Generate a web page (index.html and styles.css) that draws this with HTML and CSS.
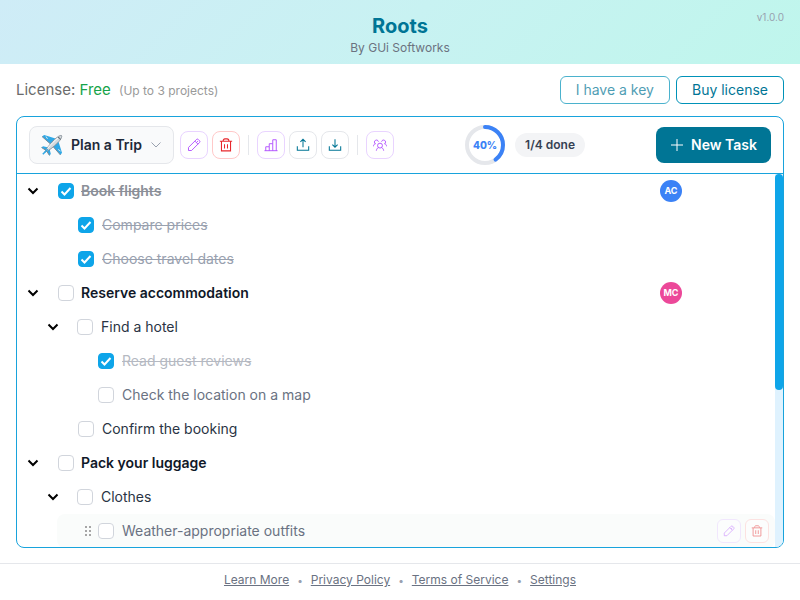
FILE: index.html
```html
<!DOCTYPE html>
<html lang="en">
<head>
  <meta charset="UTF-8">
  <meta name="viewport" content="width=device-width, initial-scale=1">
  <title>Roots</title>
  <link rel="stylesheet" href="styles.css">
</head>
<body>

  <!-- shared icons -->
  <svg class="sprite" aria-hidden="true">
    <symbol id="pencil" viewBox="0 0 16 16">
      <path d="M1.7 14.3V10.800L10.800 1.700a1.500 1.500 0 0 1 2.100 0l1.400 1.400a1.500 1.500 0 0 1 0 2.100L5.200 14.300zM9 3.500L12.500 7M10.800 5.200l1.700-1.700"/>
    </symbol>
    <symbol id="trash" viewBox="0 0 16 16">
      <path d="M1 3.800h14M4.700 3.500c0-1.500.7-2.500 2-2.500h2.600c1.300 0 2 1 2 2.500M2.800 4v10.700h10.400v-10.700M6.300 7v5M9.700 7v5" stroke-width="1.200"/>
    </symbol>
    <symbol id="chevron" viewBox="0 0 12 12">
      <path d="M1.500 3.500L6 8l4.500-4.500"/>
    </symbol>
  </svg>

  <header class="header">
    <h1>Roots</h1>
    <p>By GUi Softworks</p>
    <span class="version">v1.0.0</span>
  </header>

  <main>
    <div class="license">
      <p>License: <span class="plan">Free</span> <small>(Up to 3 projects)</small></p>
      <div class="license-buttons">
        <button class="btn faded">I have a key</button>
        <button class="btn">Buy license</button>
      </div>
    </div>

    <section class="panel">
      <div class="toolbar">
        <div class="tools">
          <label class="project">
            <svg class="plane" viewBox="0 0 22 22" aria-hidden="true">
              <path d="M1 2.500l2.200-1.500 11.300 3.500-5 5.500z" fill="#2fa8e6"/>
              <path d="M19.500 21l1.500-2.200-3.500-11.300-5.500 5z" fill="#2fa8e6"/>
              <path d="M.5 13.500l1.500-1.300 5.500 1.300-2.500 3z" fill="#2fa8e6"/>
              <path d="M8.500 21.500l1.300-1.500-1.300-5.500-3 2.500z" fill="#2fa8e6"/>
              <path d="M1 2.500l8.500 7.500M19.500 21L12 12.500M.5 13.500l4.700 3M8.500 21.500l-3-4.700" stroke="#7d8c98" fill="none"/>
              <path d="M5 2.500l1.500 2.300M19.500 17l-2.300-1.500" stroke="#dfe6ea" fill="none"/>
              <path d="M3.500 18.500c1.500-3.500 5.500-8.500 10-13 2.500-2.500 5.700-4.500 7-4 .9 1.400-1 4.500-3.500 7-4.500 4.500-9.500 8.500-13.500 10z" fill="#d5dade" stroke="#7d8892" stroke-width=".8"/>
              <path d="M6.500 14.500c3-3.800 7.500-8.500 11-10.800" stroke="#fff" fill="none"/>
              <path d="M17 3.500l1.700.6.600 1.500" stroke="#4d5963" fill="none"/>
              <path d="M1.800 20.200l5-5" stroke="#2fa8e6" stroke-width="1.500"/>
            </svg>
            <select aria-label="Project">
              <option>Plan a Trip</option>
            </select>
            <svg class="caret" aria-hidden="true"><use href="#chevron"/></svg>
          </label>
          <button class="icon-btn purple" aria-label="Edit project"><svg><use href="#pencil"/></svg></button>
          <button class="icon-btn red" aria-label="Delete project"><svg><use href="#trash"/></svg></button>
          <span class="divider"></span>
          <button class="icon-btn purple" aria-label="Statistics">
            <svg viewBox="0 0 16 16"><path d="M.5 14.500h15M2 14.500v-4.500h4v4.500M6 10v-3.500h4v8M10 6.500v-4.500h4v12.500"/></svg>
          </button>
          <button class="icon-btn teal" aria-label="Export">
            <svg viewBox="0 0 16 16"><path d="M1.500 9.500v4.500h13v-4.500M8 10.500v-9M5 4.500l3-3 3 3" stroke-width="1.200"/></svg>
          </button>
          <button class="icon-btn teal" aria-label="Import">
            <svg viewBox="0 0 16 16"><path d="M1.500 9.500v4.500h13v-4.500M8 1.500v9M5 7.500l3 3 3-3" stroke-width="1.200"/></svg>
          </button>
          <span class="divider"></span>
          <button class="icon-btn purple" aria-label="Team">
            <svg viewBox="0 0 16 16"><circle cx="8" cy="8.700" r="2.800"/><path d="M3.800 14.500c.2-1.700 1-2.800 2.400-3.500M12.200 14.500c-.2-1.700-1-2.800-2.400-3.500M2.600 6.500a2.300 2.300 0 1 1 3.600-2.300M.5 9.500c.1-1.700.9-2.700 2.500-3M13.400 6.500a2.300 2.300 0 1 0-3.600-2.300M15.500 9.500c-.1-1.700-.9-2.700-2.500-3"/></svg>
          </button>
        </div>

        <div class="progress">
          <div class="ring">
            <svg viewBox="0 0 40 40" aria-hidden="true">
              <circle cx="20" cy="20" r="18" stroke="#e5e7eb"/>
              <circle cx="20" cy="20" r="18" stroke="#3b82f6" pathLength="100" stroke-dasharray="40 100" stroke-linecap="round" transform="rotate(-90 20 20)"/>
            </svg>
            <span>40%</span>
          </div>
          <span class="pill">1/4 done</span>
        </div>

        <button class="new-task">
          <svg viewBox="0 0 14 14" aria-hidden="true"><path d="M7 1v12M1 7h12"/></svg>
          New Task
        </button>
      </div>

      <div class="content">
        <ul class="tasks">
          <li class="task parent">
            <button class="toggle" aria-label="Collapse"><svg><use href="#chevron"/></svg></button>
            <span class="grip"></span>
            <label><input type="checkbox" checked><span>Book flights</span></label>
            <span class="avatar blue">AC</span>
            <span class="actions"></span>
          </li>
          <li class="task level-1">
            <span class="toggle"></span>
            <span class="grip"></span>
            <label><input type="checkbox" checked><span>Compare prices</span></label>
          </li>
          <li class="task level-1">
            <span class="toggle"></span>
            <span class="grip"></span>
            <label><input type="checkbox" checked><span>Choose travel dates</span></label>
          </li>
          <li class="task parent">
            <button class="toggle" aria-label="Collapse"><svg><use href="#chevron"/></svg></button>
            <span class="grip"></span>
            <label><input type="checkbox"><span>Reserve accommodation</span></label>
            <span class="avatar pink">MC</span>
            <span class="actions"></span>
          </li>
          <li class="task level-1">
            <button class="toggle" aria-label="Collapse"><svg><use href="#chevron"/></svg></button>
            <span class="grip"></span>
            <label><input type="checkbox"><span>Find a hotel</span></label>
          </li>
          <li class="task level-2">
            <span class="toggle"></span>
            <span class="grip"></span>
            <label><input type="checkbox" checked><span>Read guest reviews</span></label>
          </li>
          <li class="task level-2">
            <span class="toggle"></span>
            <span class="grip"></span>
            <label><input type="checkbox"><span>Check the location on a map</span></label>
          </li>
          <li class="task level-1">
            <span class="toggle"></span>
            <span class="grip"></span>
            <label><input type="checkbox"><span>Confirm the booking</span></label>
          </li>
          <li class="task parent">
            <button class="toggle" aria-label="Collapse"><svg><use href="#chevron"/></svg></button>
            <span class="grip"></span>
            <label><input type="checkbox"><span>Pack your luggage</span></label>
          </li>
          <li class="task level-1">
            <button class="toggle" aria-label="Collapse"><svg><use href="#chevron"/></svg></button>
            <span class="grip"></span>
            <label><input type="checkbox"><span>Clothes</span></label>
          </li>
          <li class="task level-2 active">
            <span class="toggle"></span>
            <span class="grip">
              <svg viewBox="0 0 8 12" aria-hidden="true">
                <circle cx="2" cy="2" r="1"/><circle cx="6" cy="2" r="1"/>
                <circle cx="2" cy="6" r="1"/><circle cx="6" cy="6" r="1"/>
                <circle cx="2" cy="10" r="1"/><circle cx="6" cy="10" r="1"/>
              </svg>
            </span>
            <label><input type="checkbox"><span>Weather-appropriate outfits</span></label>
            <span class="actions">
              <button class="icon-btn small purple" aria-label="Edit task"><svg><use href="#pencil"/></svg></button>
              <button class="icon-btn small red" aria-label="Delete task"><svg><use href="#trash"/></svg></button>
            </span>
          </li>
        </ul>
        <div class="scrollbar"><div class="thumb"></div></div>
      </div>
    </section>
  </main>

  <footer class="footer">
    <a href="#">Learn More</a>
    <span>•</span>
    <a href="#">Privacy Policy</a>
    <span>•</span>
    <a href="#">Terms of Service</a>
    <span>•</span>
    <a href="#">Settings</a>
  </footer>

</body>
</html>
```
FILE: styles.css
```css
* {
  box-sizing: border-box;
}
body {
  margin: 0;
  height: 100vh;
  display: flex;
  flex-direction: column;
  font-family: Inter, sans-serif;
  font-size: 14px;
  line-height: 20px;
  color: #2a3444;
  background: #fff;
}
h1, p, ul {
  margin: 0;
  padding: 0;
}
button, select, input {
  font: inherit;
  color: inherit;
  margin: 0;
}
button {
  cursor: pointer;
}
svg {
  fill: none;
  stroke: currentColor;
  display: block;
}
.sprite {
  display: none;
}

/* header */
.header {
  position: relative;
  padding: 12px 16px 8px;
  text-align: center;
  background: linear-gradient(135deg, #cfecf7, #c8f2f2 50%, #bff6ec);
}
.header h1 {
  font-size: 20px;
  line-height: 28px;
  font-weight: 700;
  color: #007595;
}
.header p {
  font-size: 12px;
  line-height: 16px;
  color: #6b7280;
}
.version {
  position: absolute;
  top: 10px;
  right: 16px;
  font-size: 10px;
  line-height: 15px;
  color: #99a1af;
}

main {
  flex: 1;
  min-height: 0;
  display: flex;
  flex-direction: column;
  gap: 12px;
  padding: 12px 16px 15px;
}
.license {
  display: flex;
  justify-content: space-between;
  align-items: center;
  font-size: 15px;
  color: #6b6b6b;
}
.license small {
  margin-left: 4px;
  font-size: 12px;
  color: #999;
}
.plan {
  color: #16a34a;
}
.license-buttons {
  display: flex;
  gap: 6px;
}
.btn {
  height: 28px;
  padding: 0 15px;
  font-size: 14px;
  color: #007595;
  background: #fff;
  border: 1px solid #0092b8;
  border-radius: 6px;
}
.btn.faded {
  opacity: 0.7;
}

/* panel */
.panel {
  flex: 1;
  min-height: 0;
  display: flex;
  flex-direction: column;
  border: 1px solid #18a3dc;
  border-radius: 8px;
  overflow: hidden;
}
.toolbar {
  display: flex;
  align-items: center;
  justify-content: space-between;
  padding: 9px 12px;
  border-bottom: 1px solid #18a3dc;
}
.tools {
  display: flex;
  align-items: center;
  gap: 4px;
}
.project {
  display: flex;
  align-items: center;
  gap: 8px;
  height: 38px;
  margin-right: 2px;
  padding: 0 11px;
  background: #f9fafb;
  border: 1px solid #e5e7eb;
  border-radius: 8px;
}
.project select {
  appearance: none;
  padding: 0;
  border: 0;
  background: none;
  font-weight: 600;
  color: #1e2939;
}
.plane {
  width: 22px;
  height: 22px;
  stroke: none;
}
.caret {
  width: 12px;
  height: 12px;
  color: #99a1af;
}
.icon-btn {
  display: flex;
  align-items: center;
  justify-content: center;
  width: 28px;
  height: 28px;
  padding: 0;
  background: #fff;
  border: 1px solid #e5e7eb;
  border-radius: 8px;
}
.icon-btn svg {
  width: 14px;
  height: 14px;
}
.icon-btn.small {
  width: 24px;
  height: 24px;
  border-radius: 6px;
  opacity: 0.5;
}
.icon-btn.small svg {
  width: 12px;
  height: 12px;
}
.purple {
  color: #ad46ff;
  border-color: #e9d4ff;
}
.red {
  color: #e7282d;
  border-color: #ffc9c9;
}
.teal {
  color: #007595;
}
.divider {
  width: 1px;
  height: 20px;
  margin: 0 4px;
  background: #e5e7eb;
}
.progress {
  display: flex;
  align-items: center;
  gap: 10px;
}
.ring {
  display: grid;
  place-items: center;
  margin: -1px 0;
}
.ring svg,
.ring span {
  grid-area: 1 / 1;
}
.ring svg {
  width: 40px;
  height: 40px;
  stroke-width: 4;
}
.ring span {
  font-size: 10px;
  font-weight: 800;
  color: #3b82f6;
}
.pill {
  padding: 3px 10px;
  font-size: 12px;
  line-height: 18px;
  font-weight: 600;
  color: #364153;
  background: #f3f4f6;
  border-radius: 12px;
}
.new-task {
  display: flex;
  align-items: center;
  gap: 7px;
  height: 36px;
  padding: 0 14px;
  font-weight: 600;
  color: #fff;
  background: #007595;
  border: 0;
  border-radius: 8px;
}
.new-task svg {
  width: 14px;
  height: 14px;
}

/* task list */
.content {
  flex: 1;
  min-height: 0;
  display: flex;
}
.tasks {
  flex: 1;
  overflow: hidden;
  list-style: none;
}
.task {
  display: flex;
  align-items: center;
  height: 34px;
  padding: 0 6px;
  border-radius: 8px;
}
.task label {
  flex: 1;
  display: flex;
  align-items: center;
  gap: 8px;
}
.level-1 {
  margin-left: 20px;
}
.level-2 {
  margin-left: 40px;
  color: #6a7282;
}
.parent {
  font-weight: 600;
  color: #101828;
}
.parent label {
  gap: 7px;
}
.active {
  background: #fafcfb;
}
.toggle {
  width: 20px;
  height: 20px;
  padding: 4px;
  border: 0;
  background: none;
  color: #000;
}
.toggle svg {
  width: 12px;
  height: 12px;
  stroke-width: 2;
}
.grip {
  width: 15px;
}
.level-1 button + .grip {
  width: 14px;
}
.grip svg {
  width: 8px;
  height: 12px;
  margin-left: 1px;
  fill: #8a8a8a;
  stroke: none;
}
.task input {
  appearance: none;
  width: 16px;
  height: 16px;
  background: #fff;
  border: 1px solid #d1d5dc;
  border-radius: 4px;
}
.task input:checked {
  border-color: #0ea5e9;
  background: #0ea5e9 url("data:image/svg+xml,%3Csvg xmlns='http://www.w3.org/2000/svg' viewBox='0 0 14 14'%3E%3Cpath d='M2.500 7.500l3 3 6-6.500' fill='none' stroke='white' stroke-width='2'/%3E%3C/svg%3E") center / 14px no-repeat;
}
.task input:checked + span {
  color: #99a1af;
  text-decoration: line-through;
}
.parent input:checked + span {
  color: #8b8f98;
}
.level-2 input:checked + span {
  color: #b5b9c2;
}
.avatar {
  width: 22px;
  height: 22px;
  margin-right: 35px;
  border-radius: 50%;
  font-size: 9px;
  line-height: 22px;
  font-weight: 700;
  text-align: center;
  color: #fff;
}
.blue { background: #3b82f6; }
.pink { background: #ec4899; }

.actions {
  display: flex;
  gap: 4px;
  width: 52px;
}
.scrollbar {
  width: 8px;
  background: #dff2fe;
}
.thumb {
  height: 58%;
  background: #0ea5e9;
  border-radius: 4px;
}

/* footer */
.footer {
  display: flex;
  justify-content: center;
  gap: 8px;
  padding: 8px 16px 12px;
  border-top: 1px solid #e5e7eb;
  font-size: 12px;
  line-height: 16px;
  color: #99a1af;
}
.footer span {
  font-size: 10px;
}
.footer a {
  color: #6a7282;
}
```
